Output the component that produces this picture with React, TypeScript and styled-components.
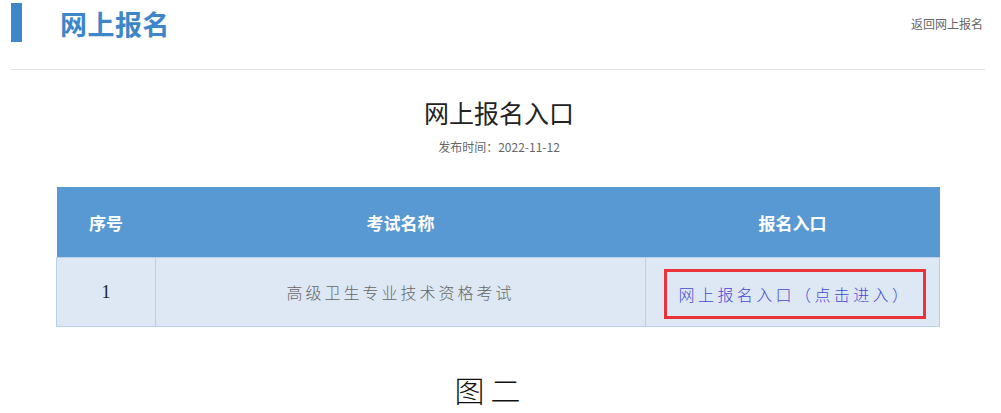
import React from 'react';
import styled, { createGlobalStyle } from 'styled-components';

const GlobalStyle = createGlobalStyle`
  body {
    margin: 0;
    background: #fff;
    font-family: "Noto Sans CJK SC", "Noto Sans", sans-serif;
  }
`;

const Page = styled.div`
  width: 1001px;
  height: 413px;
  overflow: hidden;
`;

const TopBar = styled.div`
  display: flex;
  align-items: flex-start;
  height: 70px;
  margin: 0 16px 0 11px;
  border-bottom: 1px solid #e2e2e2;
  box-sizing: border-box;
`;

const Marker = styled.div`
  width: 11px;
  height: 39px;
  margin-top: 3px;
  background: #3d86c9;
`;

const Title = styled.h1`
  margin: 6px 0 0 38px;
  font-size: 27px;
  line-height: 36px;
  font-weight: 700;
  color: #3d86c9;
  letter-spacing: 0.5px;
`;

const BackLink = styled.a`
  margin: 16px 2px 0 auto;
  font-size: 12px;
  line-height: 16px;
  color: #666;
  text-decoration: none;
`;

const Heading = styled.div`
  display: flex;
  flex-direction: column;
  align-items: center;
  padding-top: 25px;
  margin-left: -3px;
`;

const PageTitle = styled.h2`
  margin: 0;
  font-size: 25px;
  line-height: 34px;
  font-weight: 400;
  color: #222;
`;

const PubDate = styled.div`
  margin-top: 10px;
  font-size: 12px;
  line-height: 16px;
  color: #666;
`;

const Table = styled.table`
  margin: 32px 0 0 56px;
  width: 883px;
  border-collapse: collapse;
  table-layout: fixed;
`;

const HeadCell = styled.th<{ w: number }>`
  width: ${p => p.w}px;
  height: 70px;
  padding: 0;
  background: #5899d4;
  color: #fff;
  font-size: 17px;
  font-weight: 700;
  text-align: center;
`;

const Cell = styled.td<{ tone?: 'num' | 'name' }>`
  height: 68px;
  padding: 0;
  background: #dde8f4;
  border: 1px solid #b9d0e8;
  text-align: center;
  font-family: ${p => (p.tone === 'num' ? '"Liberation Serif", serif' : '"Noto Sans CJK SC", sans-serif')};
  font-size: ${p => (p.tone === 'num' ? '18px' : '16px')};
  font-weight: 300;
  color: ${p => (p.tone === 'num' ? '#222' : '#666')};
  letter-spacing: ${p => (p.tone === 'num' ? '0' : '3px')};
`;

const EntryBox = styled.a`
  display: inline-flex;
  align-items: center;
  justify-content: center;
  width: 262px;
  height: 50px;
  box-sizing: border-box;
  border: 3px solid #ea3339;
  color: #4848d6;
  font-size: 16px;
  font-weight: 300;
  letter-spacing: 3.4px;
  text-decoration: none;
  margin: 4px 0 0 5px;
`;

const Caption = styled.div`
  margin-top: 44px;
  text-align: center;
  padding-right: 20px;
  font-family: "Noto Sans CJK SC", sans-serif;
  font-size: 30px;
  font-weight: 300;
  line-height: 36px;
  letter-spacing: 6px;
  color: #111;
`;

export default function App() {
  return (
    <Page>
      <GlobalStyle />
      <TopBar>
        <Marker />
        <Title>网上报名</Title>
        <BackLink href="#">返回网上报名</BackLink>
      </TopBar>
      <Heading>
        <PageTitle>网上报名入口</PageTitle>
        <PubDate>发布时间：2022-11-12</PubDate>
      </Heading>
      <Table>
        <thead>
          <tr>
            <HeadCell w={99}>序号</HeadCell>
            <HeadCell w={490}>考试名称</HeadCell>
            <HeadCell w={294}>报名入口</HeadCell>
          </tr>
        </thead>
        <tbody>
          <tr>
            <Cell tone="num">1</Cell>
            <Cell tone="name">高级卫生专业技术资格考试</Cell>
            <Cell>
              <EntryBox href="#">网上报名入口（点击进入）</EntryBox>
            </Cell>
          </tr>
        </tbody>
      </Table>
      <Caption>图二</Caption>
    </Page>
  );
}
